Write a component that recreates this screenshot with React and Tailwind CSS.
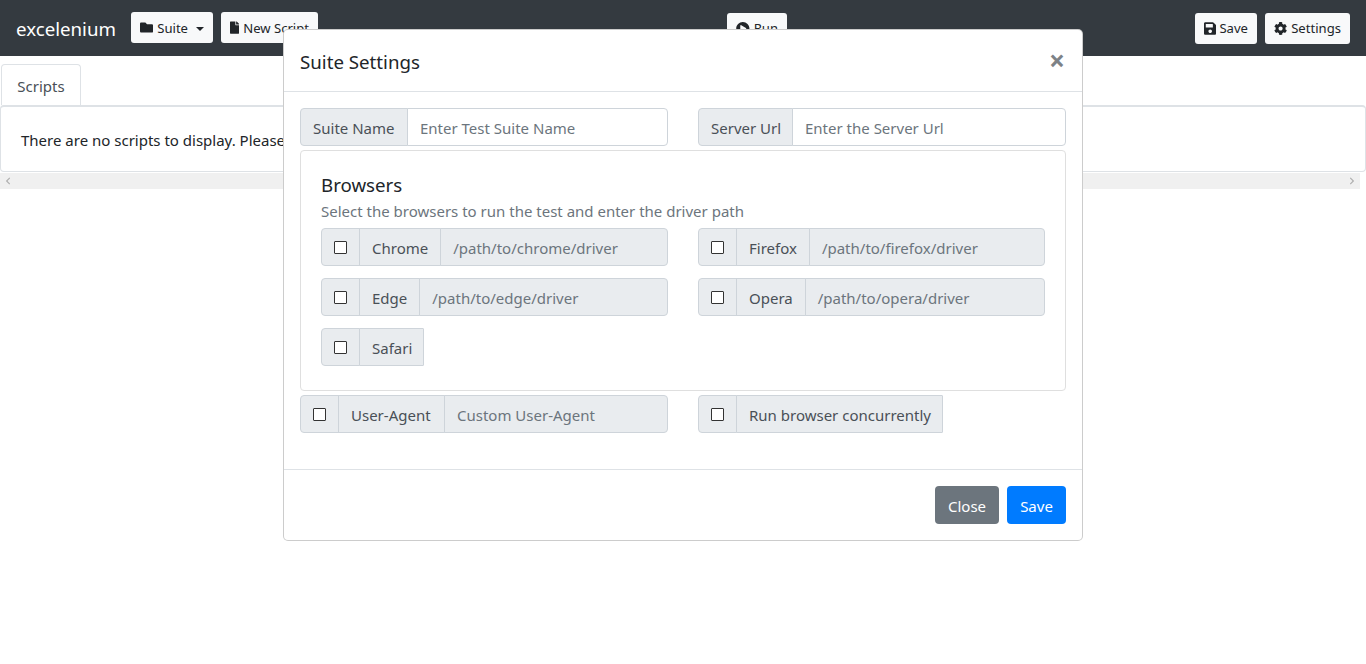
import { FaFolder, FaFile, FaSave, FaCog, FaPlayCircle, FaChevronLeft, FaChevronRight } from "react-icons/fa";

const Btn = ({ icon, children, className = "" }) => (
  <button className={"h-[31px] px-[9px] flex items-center whitespace-nowrap rounded-[3px] bg-[#f8f9fa] text-[#212529] text-[13.1px] leading-none " + className}>
    {icon}
    <span className="flex items-center pt-[2px]">{children}</span>
  </button>
);

const Add = ({ children, className = "" }) => (
  <div className={"h-[38px] shrink-0 flex items-center px-3 pt-[3px] bg-[#e9ecef] border border-[#ced4da] text-[#495057] whitespace-nowrap " + className}>
    {children}
  </div>
);

const Check = () => (
  <div className="rounded-l-[4px] w-[39px] h-[38px] shrink-0 flex items-center justify-center bg-[#e9ecef] border border-[#ced4da]">
    <span className="w-[13px] h-[13px] border border-[#333] bg-white rounded-[1px]" />
  </div>
);

const Browser = ({ name, path, className = "" }) => (
  <div className="flex h-[38px] mb-3">
    <Check />
    <Add className={"-ml-px " + (path ? "" : "rounded-r-[1px] ") + className}>{name}</Add>
    {path && (
      <div className="-ml-px flex-1 h-[38px] flex items-center px-3 pt-[3px] bg-[#e9ecef] border border-[#ced4da] rounded-r-[4px] text-[#6c757d]">
        {path}
      </div>
    )}
  </div>
);

const TextGroup = ({ label, placeholder, className = "" }) => (
  <div className="flex h-[38px]">
    <Add className={"rounded-l-[4px] " + className}>{label}</Add>
    <div className="-ml-px flex-1 h-[38px] flex items-center px-3 pt-[3px] bg-white border border-[#ced4da] rounded-r-[4px] text-[#6c757d]">
      {placeholder}
    </div>
  </div>
);

export default function App() {
  return (
    <div className="relative h-[664px] overflow-hidden bg-white text-[#212529] text-[15px] font-['Noto_Sans','Open_Sans',sans-serif]">
      <nav className="h-14 bg-[#343a40] flex items-center justify-between pl-4 pr-4">
        <div className="flex items-center flex-1">
          <span className="text-white text-[18.7px] mr-4 w-[99px] pt-[3px]">excelenium</span>
          <Btn icon={<FaFolder className="w-[15px] h-[15px] mr-[4px]" />} className="w-[82px]">
            Suite
            <span className="ml-2 border-x-[4.5px] border-x-transparent border-t-[4.5px] border-t-[#212529]" />
          </Btn>
          <Btn icon={<FaFile className="w-[11px] h-[15px] mr-[4px]" />} className="w-[97px] ml-2">New Script</Btn>
        </div>
        <Btn icon={<FaPlayCircle className="w-[15px] h-[15px] mr-[4px]" />} className="w-[60px] mr-[408px]">Run</Btn>
        <div className="flex items-center">
          <Btn icon={<FaSave className="w-[13px] h-[15px] mr-[3px]" />} className="w-[62px]">Save</Btn>
          <Btn icon={<FaCog className="w-[14px] h-[15px] mr-[4px]" />} className="w-[85px] ml-2">Settings</Btn>
        </div>
      </nav>

      <div className="mt-2 flex">
        <div className="ml-px w-[80px] h-[41px] flex items-center justify-center pt-[3px] border border-b-0 border-[#dee2e6] rounded-t-[4px] text-[#495057]">
          Scripts
        </div>
      </div>
      <div className="h-[67px] border border-[#dee2e6] border-t-2 rounded-[4px] flex items-center pl-5 pt-[2px]">
        There are no scripts to display. Please add a script.
      </div>
      <div className="mt-px h-4 mr-[6px] bg-[#f0f0f0] flex items-center justify-between px-1 text-[#b0b0b0]">
        <FaChevronLeft className="w-2 h-2" />
        <FaChevronRight className="w-2 h-2" />
      </div>

      <div className="absolute left-[283px] top-[29px] w-[800px] h-[512px] bg-white border border-[rgba(0,0,0,0.2)] rounded-[5px] flex flex-col">
        <div className="h-[62px] shrink-0 border-b border-[#dee2e6] flex items-start justify-between pl-4 pr-[17px] pt-[17px]">
          <div className="text-[18.7px] leading-[30px]">Suite Settings</div>
          <div className="text-[28px] leading-[26px] font-bold text-[#7d8287]">×</div>
        </div>
        <div className="flex-1 px-4 pt-4">
          <div className="grid grid-cols-2 gap-x-[30px]">
            <TextGroup label="Suite Name" placeholder="Enter Test Suite Name" className="w-[108px]" />
            <TextGroup label="Server Url" placeholder="Enter the Server Url" className="w-[95px]" />
          </div>
          <div className="mt-1 h-[241px] border border-[#dfdfdf] rounded-[4px] px-5 pt-[22px]">
            <div className="text-[18.7px] leading-6 h-6">Browsers</div>
            <div className="mt-[2px] text-[#6c757d] leading-6 h-[29px]">Select the browsers to run the test and enter the driver path</div>
            <div className="grid grid-cols-2 gap-x-[30px]">
              <Browser name="Chrome" path="/path/to/chrome/driver" />
              <Browser name="Firefox" path="/path/to/firefox/driver" />
              <Browser name="Edge" path="/path/to/edge/driver" />
              <Browser name="Opera" path="/path/to/opera/driver" />
              <div className="flex"><Browser name="Safari" className="w-[65px]" /></div>
            </div>
          </div>
          <div className="mt-1 grid grid-cols-2 gap-x-[30px]">
            <div className="flex h-[38px]">
              <Check />
              <Add className="-ml-px w-[107px]">User-Agent</Add>
              <div className="-ml-px flex-1 h-[38px] flex items-center px-3 pt-[3px] bg-[#e9ecef] border border-[#ced4da] rounded-r-[4px] text-[#6c757d]">
                Custom User-Agent
              </div>
            </div>
            <div className="flex h-[38px]">
              <Check />
              <Add className="-ml-px w-[207px] rounded-r-[1px]">Run browser concurrently</Add>
            </div>
          </div>
        </div>
        <div className="h-[71px] shrink-0 border-t border-[#dee2e6] flex items-center justify-end gap-2 px-4">
          <button className="h-[38px] w-[64px] rounded-[4px] bg-[#6c757d] text-white pt-[3px]">Close</button>
          <button className="h-[38px] w-[59px] rounded-[4px] bg-[#007bff] text-white pt-[3px]">Save</button>
        </div>
      </div>
    </div>
  );
}
